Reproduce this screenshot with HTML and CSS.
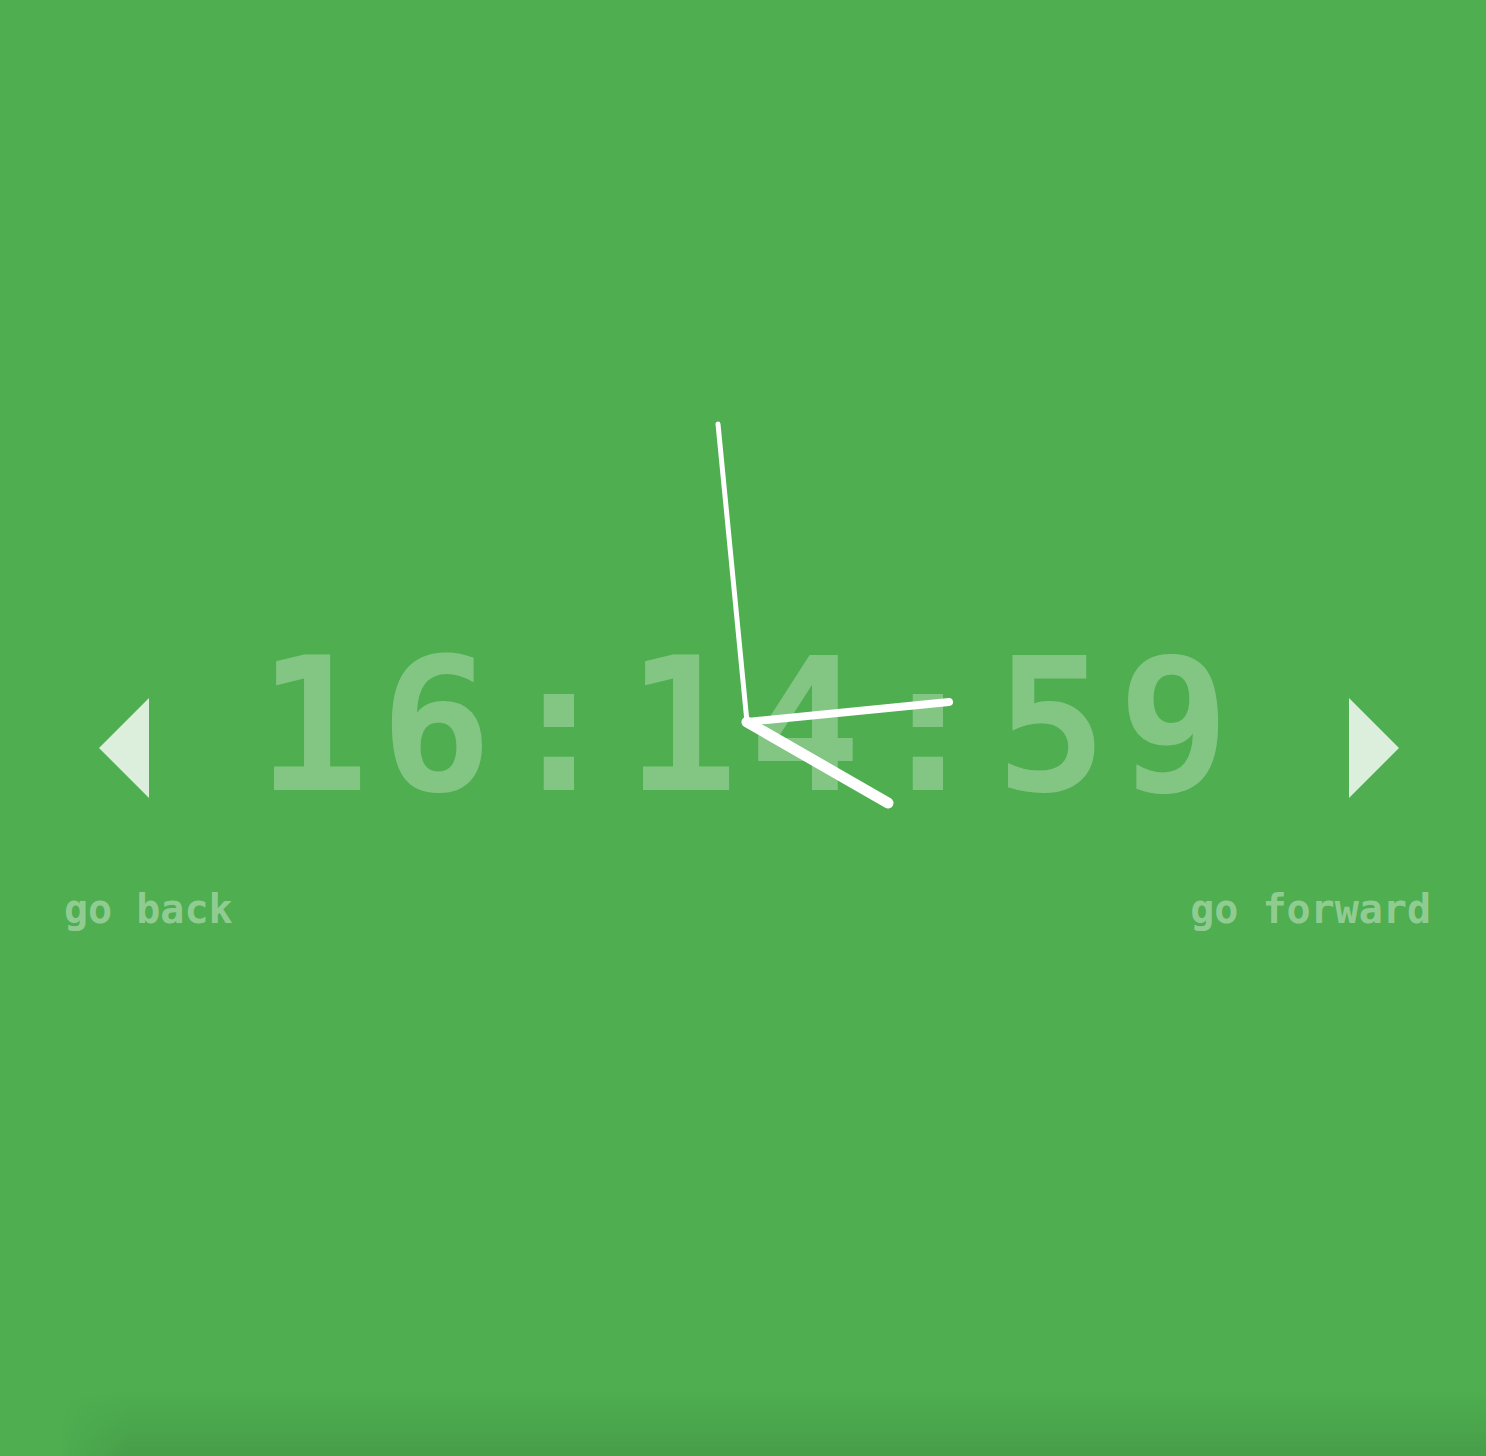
FILE: index.html
```html
<!DOCTYPE html>
<html lang="en">
<head>
<meta charset="utf-8">
<title>Clock</title>
<link rel="stylesheet" href="styles.css">
</head>
<body>
<main class="page">
  <div class="row">
    <button class="arrow arrow-left" aria-label="go back"></button>
    <div class="time">16:14:59</div>
    <button class="arrow arrow-right" aria-label="go forward"></button>
  </div>
  <div class="labels">
    <span class="label">go back</span>
    <span class="label">go forward</span>
  </div>
  <svg class="hands" width="1486" height="1456" viewBox="0 0 1486 1456">
    <line x1="747" y1="722" x2="718" y2="424" stroke="#fff" stroke-width="5" stroke-linecap="round"/>
    <line x1="747" y1="722" x2="949" y2="702" stroke="#fff" stroke-width="8" stroke-linecap="round"/>
    <line x1="747" y1="722" x2="888" y2="803" stroke="#fff" stroke-width="11" stroke-linecap="round"/>
  </svg>
  <div class="shade"></div>
</main>
</body>
</html>
```

FILE: styles.css
```css
html, body {
  margin: 0;
  padding: 0;
}
body {
  background: #4eae50;
  width: 1486px;
  height: 1456px;
  overflow: hidden;
  font-family: "DejaVu Sans Mono", "Liberation Mono", monospace;
}
.page {
  position: relative;
  height: 1456px;
  padding-top: 626px;
  box-sizing: border-box;
  overflow: hidden;
}
.row {
  display: flex;
  align-items: center;
  justify-content: space-between;
  padding: 0 87px 0 99px;
  height: 240px;
  margin-top: 2px;
}
.arrow {
  border: 0;
  padding: 0;
  margin: 0;
  background: transparent;
  width: 0;
  height: 0;
  border-top: 50px solid transparent;
  border-bottom: 50px solid transparent;
  cursor: pointer;
}
.arrow-left {
  border-right: 50px solid rgba(255, 255, 255, 0.8);
}
.arrow-right {
  border-left: 50px solid rgba(255, 255, 255, 0.8);
}
.time {
  font-size: 186px;
  line-height: 200px;
  letter-spacing: 11px;
  font-weight: bold;
  color: rgba(255, 255, 255, 0.3);
  margin-bottom: 44px;
  white-space: nowrap;
}
.labels {
  display: flex;
  justify-content: space-between;
  padding: 0 55px 0 64px;
  margin-top: 18px;
}
.label {
  font-size: 40px;
  font-weight: bold;
  color: rgba(255, 255, 255, 0.4);
  white-space: pre;
}
.hands {
  position: absolute;
  left: 0;
  top: 0;
  pointer-events: none;
}
.shade {
  position: absolute;
  left: 0;
  right: 0;
  bottom: 0;
  height: 64px;
  background: linear-gradient(to bottom, rgba(0, 0, 0, 0), rgba(0, 0, 0, 0.03) 40%, rgba(0, 0, 0, 0.09));
  -webkit-mask-image: linear-gradient(to right, transparent 60px, #000 130px);
  mask-image: linear-gradient(to right, transparent 60px, #000 130px);
}
```
